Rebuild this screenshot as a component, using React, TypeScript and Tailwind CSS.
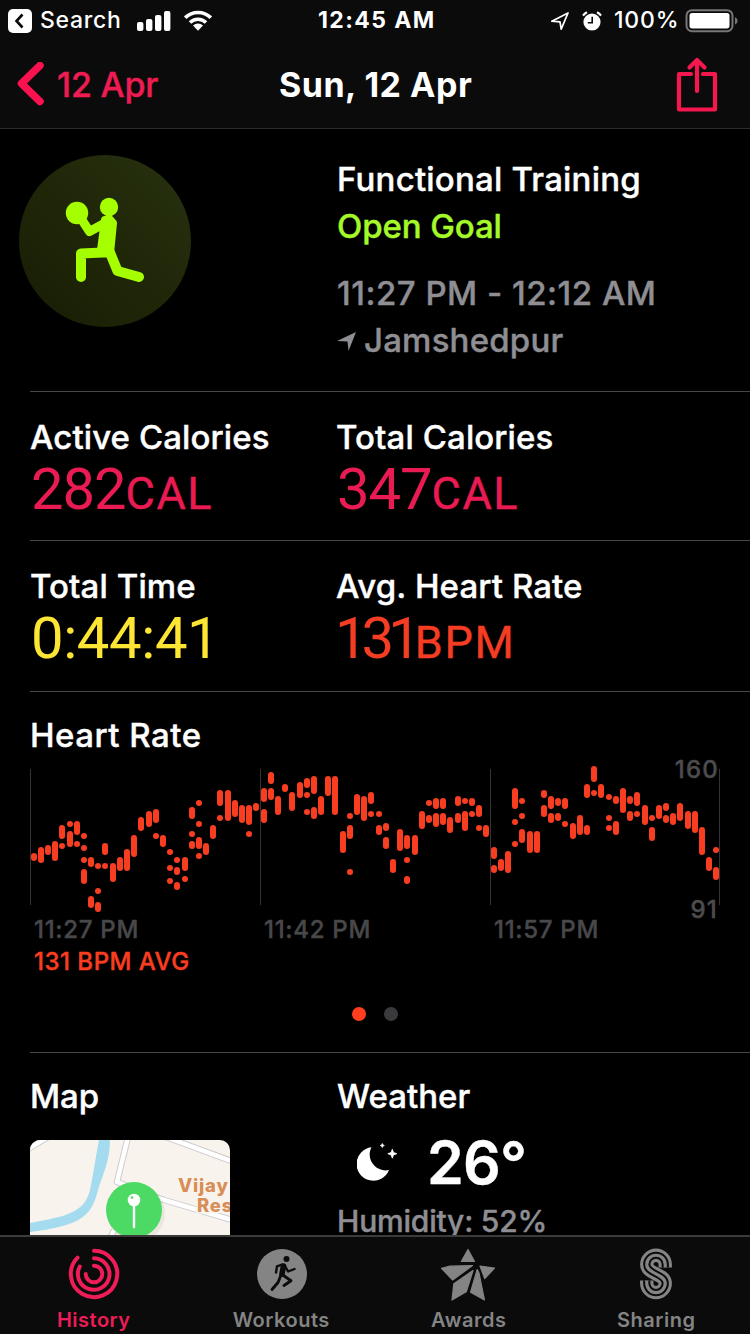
import type { ReactNode } from "react";

// a single number is a dot, a pair is a bar from top to bottom
type Reading = number | [number, number];

const READINGS: Reading[][] = [
    [[98, 106]], [[92, 108]], [[90, 100]], [[86, 106]],
    [[70, 84], 91], [69, [76, 92]], [[66, 80], 89], [81, 93, 105, [114, 129]],
    [[102, 112], [141, 153]], [111, 136, [147, 157]], [[88, 100], 111], [[108, 127]],
    [[102, 116]], [[94, 116]], [[80, 102]], [[62, 76]],
    [[56, 72]], [[54, 68], 81], [[80, 92]], [97, 113, 126],
    [105, [112, 120], [127, 135]], [[102, 116], 124], [[52, 64], 79, [86, 94]], [48, 69, [82, 94], 101],
    [[88, 100]], [[70, 84]], [[35, 51], 63], [[35, 66]],
    [[45, 62]], [[50, 68]], [[50, 70], 79], [[48, 56]],
    // 11:42
    [[33, 47], [54, 68]], [[17, 29], [33, 45]], [[41, 60]], [[29, 37]],
    [[37, 56]], [[27, 43]], [[23, 33], 40, 57], [[21, 39], [52, 64]],
    [[41, 60]], [[21, 41]], [[21, 60]], [[76, 98]],
    [61, [70, 84], 117], [[39, 60]], [[41, 66]], [[37, 49], 59],
    [59, [70, 80]], [[68, 76], [82, 94]], [[104, 118]], [[74, 96]],
    [[80, 94], 105, [121, 129]], [[80, 100]], [[56, 74]], [48, [60, 68]],
    [[43, 54], [58, 72]], [[43, 54], [58, 70]], [[62, 78]], [[41, 51], [58, 68]],
    [46, [56, 76]], [[43, 51], 59], [[50, 62], 73], [[70, 82]],
    // 11:57
    [[92, 104], [110, 118]], [[104, 116]], [[96, 118]], [[33, 54], 67, 89],
    [46, 61, [74, 88]], [[76, 98]], [[76, 98]], [[35, 43], [50, 62]],
    [[41, 54], [58, 68]], [[43, 51], [58, 66]], [[43, 54], 69], [[68, 84]],
    [[60, 80]], [[29, 43], [70, 80]], [[11, 27], 38], [[29, 43]],
    [42, 63, 73], [[41, 49], [66, 80]], [[33, 58]], [[41, 49], [56, 66]],
    [[37, 51], 59], [[50, 70]], [63, [72, 86]], [[50, 64]],
    [[48, 56], [60, 68]], [[58, 70]], [[48, 66]], [[56, 74]],
    [[56, 78]], [[72, 100]], [[102, 116]], [95, [112, 125]],
];

const TIMES = ["11:27 PM", "11:42 PM", "11:57 PM"];

function StatusBar() {
    return (
        <div className="flex h-[41px] items-center pl-2 text-[23px] font-medium text-white">
            <svg className="h-6 w-6" viewBox="0 0 24 24">
                <rect width="24" height="24" rx="5" fill="#fff" />
                <path d="M14.5 5.5 8.5 12l6 6.5" fill="none" stroke="#0b0b0b" strokeWidth="2.6" />
            </svg>
            <span className="ml-2 w-[97px] tracking-[0.7px]">Search</span>
            <svg className="h-5 w-[34px]" viewBox="0 0 34 20" fill="#fff">
                <rect x="0" y="11" width="6.4" height="9" rx="2" />
                <rect x="9" y="8" width="6.4" height="12" rx="2" />
                <rect x="18" y="4" width="6.4" height="16" rx="2" />
                <rect x="27" y="0" width="6.4" height="20" rx="2" />
            </svg>
            <svg className="ml-[13px] h-[21px] w-7" viewBox="0 0 28 21">
                <g fill="none" stroke="#fff" strokeWidth="3.6">
                    <path d="M1.2 7.7a18.2 18.2 0 0 1 25.6 0" />
                    <path d="M6 12.6a11.3 11.3 0 0 1 16 0" />
                </g>
                <path d="M9 15.6a7.2 7.2 0 0 1 10 0L14 20.8Z" fill="#fff" />
            </svg>
            <span className="ml-[106px] w-[232px] font-bold tracking-[1.4px]">12:45 AM</span>
            <svg className="h-5 w-5" viewBox="0 0 20 20">
                <path d="M1.8 10.2 18 2 11.2 18.2 10 10.8Z" fill="none" stroke="#fff" strokeWidth="1.7" strokeLinejoin="round" />
            </svg>
            <svg className="ml-3 h-5 w-5" viewBox="0 0 20 20">
                <circle cx="10" cy="11" r="8.6" fill="#fff" />
                <path d="M10.2 5.8v6H5.8" fill="none" stroke="#0b0b0b" strokeWidth="1.6" />
                <path d="M1 4.6A12 12 0 0 1 5 1.3M15 1.3a12 12 0 0 1 4 3.3" fill="none" stroke="#fff" strokeWidth="2.2" />
            </svg>
            <span className="ml-3 w-[71px] tracking-[0.8px]">100%</span>
            <svg className="h-6 w-[54px]" viewBox="0 0 54 24">
                <rect x="1.5" y="1.2" width="46" height="21" rx="5.5" fill="none" stroke="#77777a" strokeWidth="2" />
                <rect x="4.5" y="4" width="40" height="15.4" rx="2.6" fill="#fff" />
                <path d="M50 8.3c3.4 1.2 3.4 6 0 7.2Z" fill="#77777a" />
            </svg>
        </div>
    );
}

function NavBar() {
    return (
        <div className="flex h-[87px] items-center text-[34px]">
            <svg className="ml-[17px] h-[46px] w-[28px]" viewBox="0 0 28 46">
                <path d="M23 3.500 4.500 21.500 23 39.500" fill="none" stroke="#fa114f" strokeWidth="7.500" strokeLinecap="round" strokeLinejoin="round" />
            </svg>
            <span className="ml-3 w-[222px] font-medium tracking-[-0.2px] text-[#ee1c52] [-webkit-text-stroke:0.4px]">12 Apr</span>
            <h1 className="w-[397px] font-bold tracking-[0.5px] text-white">Sun, 12 Apr</h1>
            <svg className="h-14 w-[42px]" viewBox="0 0 42 56" fill="none" stroke="#f5184f" strokeWidth="4.200" strokeLinecap="round" strokeLinejoin="round">
                <path d="M15 17H3v35.500h36V17H27" />
                <path d="M21 34V3.500M13.500 10.500 21 3l7.500 7.500" />
            </svg>
        </div>
    );
}

function WorkoutSummary() {
    return (
        <section className="flex h-[262px] pt-[26px] pl-[19px]">
            <div className="mr-[146px] h-[172px] w-[172px] shrink-0 rounded-full bg-linear-to-tr from-[#181d04] to-[#27310f]">
                <svg viewBox="0 0 172 172" fill="none" stroke="#a6ff00" strokeLinecap="round" strokeLinejoin="round">
                    <circle cx="58" cy="58" r="11.200" fill="#a6ff00" stroke="none" />
                    <circle cx="90" cy="52" r="9.200" fill="#a6ff00" stroke="none" />
                    <path d="M63 65 70.500 76.500 88 67" strokeWidth="9" />
                    <path d="M86 65 91 64.500 94 68 91 98 84 98 82 95Z" fill="#a6ff00" strokeWidth="8" />
                    <path d="M62 122V98.500L84 97.500 91 97.500 98.500 116 120 122" strokeWidth="10" />
                </svg>
            </div>
            <div className="pt-px text-[33px] leading-[47px] font-medium whitespace-nowrap text-[#8e8e93] [-webkit-text-stroke:0.4px]">
                <p className="tracking-[0.2px] text-white">Functional Training</p>
                <p className="tracking-[-0.1px] text-[#a5f928]">Open Goal</p>
                <p className="mt-5 tracking-[0.5px]">11:27 PM - 12:12 AM</p>
                <p className="flex items-center tracking-[0.2px]">
                    <svg className="mr-[7px] h-5 w-5" viewBox="0 0 20 20">
                        <path d="M0 10 19 1 11.500 20 10.500 10.500Z" fill="#8e8e93" />
                    </svg>
                    Jamshedpur
                </p>
            </div>
        </section>
    );
}

function Divider() {
    return <div className="ml-[30px] h-px bg-[#48484a]" />;
}

function Stat({ label, children, style }: { label: string; children: ReactNode; style: string }) {
    return (
        <div>
            <p className="-ml-px text-[33px] leading-10 font-medium tracking-[0.1px] [-webkit-text-stroke:0.4px]">{label}</p>
            <p className={`mt-1 font-[Roboto] text-[58px] leading-[56px] ${style}`}>{children}</p>
        </div>
    );
}

function Unit({ children }: { children: string }) {
    return <span className="text-[45px] tracking-[1.6px] [-webkit-text-stroke:0.4px]">{children}</span>;
}

function HeartRateChart() {
    return (
        <svg className="block h-[160px] w-[720px] overflow-visible" viewBox="0 0 720 160">
            {[0, 230, 460, 689].map((x) => (
                <rect key={x} x={x} y="14" width="1" height="136" fill="#343436" />
            ))}
            {READINGS.map((column, i) =>
                column.map((r, j) => {
                    const [top, bottom] = typeof r === "number" ? [r - 3, r + 3] : r;
                    const x = Math.floor(i * 7.1875 + 0.1) + 1;
                    return <rect key={`${i}-${j}`} x={x} y={top} width="6" height={bottom - top} rx="3" fill="#f93d20" />;
                })
            )}
            <g fill="#4c4c4e" stroke="#4c4c4e" strokeWidth="0.400" fontSize="24" fontWeight="500" textAnchor="end" letterSpacing="1.2">
                <text x="689" y="22.500">160</text>
                <text x="688" y="163">91</text>
            </g>
        </svg>
    );
}

function HeartRate() {
    return (
        <section className="h-[360px] pt-[23px] pl-[30px]">
            <h2 className="text-[33px] leading-10 font-medium tracking-[0.5px] [-webkit-text-stroke:0.4px]">Heart Rate</h2>
            <HeartRateChart />
            <div className="-mt-px flex pl-1 text-[24px] leading-8 font-medium tracking-[0.7px] text-[#48484a] [-webkit-text-stroke:0.4px]">
                {TIMES.map((time) => (
                    <span key={time} className="w-[230px]">{time}</span>
                ))}
            </div>
            <p className="pl-1 text-[24px] leading-8 font-medium tracking-[0.5px] text-[#f93d20] [-webkit-text-stroke:0.4px]">131 BPM AVG</p>
            <div className="mt-[29px] flex justify-center gap-[18px] pr-[30px]">
                <span className="h-3.5 w-3.5 rounded-full bg-[#ff3f1e]" />
                <span className="h-3.5 w-3.5 rounded-full bg-[#3a3a3c]" />
            </div>
        </section>
    );
}

function MapPreview() {
    return (
        <svg className="mt-6 block h-[96px] w-[200px] rounded-t-[10px]" viewBox="0 0 200 96">
            <rect width="200" height="96" fill="#f8f4ed" />
            <path d="M69 0h11c0 22-8 36-12 50-4 16-9 27-29 34-12 4-24 6-39 8v-9c14-3 28-5 38-9 13-5 19-12 22-24 4-19 6-35 9-50Z" fill="#a5dbee" />
            <g fill="none" strokeLinejoin="round">
                <path d="M-2 9 18-3M98-3 87 42l47 18 68 20M136-3l68 25M84 90l-5 12" stroke="#cfcbd0" strokeWidth="6.500" />
                <path d="M-2 9 18-3M98-3 87 42l47 18 68 20M136-3l68 25M84 90l-5 12" stroke="#fff" strokeWidth="4.500" />
            </g>
            <g fill="#d98d57" stroke="#f8f4ed" strokeWidth="3" paintOrder="stroke" fontSize="18.500" fontWeight="800" letterSpacing="0.800">
                <text x="148" y="52">Vijay</text>
                <text x="167" y="72">Res</text>
            </g>
            <circle cx="106" cy="73" r="29" fill="#000" opacity="0.06" />
            <circle cx="104" cy="70" r="28" fill="#4cd964" />
            <path d="M104 62v25" stroke="#fff" strokeWidth="2.400" strokeLinecap="round" />
            <circle cx="104" cy="60" r="6.300" fill="#fff" />
            <circle cx="102" cy="57.500" r="1.300" fill="#4cd964" />
        </svg>
    );
}

function Weather() {
    return (
        <div>
            <h2 className="leading-10">Weather</h2>
            <div className="flex h-[80px] items-center pt-3 pl-5">
                <svg className="h-10 w-[42px]" viewBox="0 0 42 40">
                    <path d="M14.500 5.200A16.800 16.800 0 1 0 32 28C20 31 8 18 14.500 5.200Z" fill="#fff" />
                    <path d="m35.300 7.200 1.200 3.300 3.300 1.200-3.300 1.200-1.200 3.300-1.200-3.300-3.300-1.200 3.300-1.200ZM25.300 1.500l.6 1.400 1.400.6-1.400.6-.6 1.400-.6-1.400-1.400-.6 1.400-.6Z" fill="#fff" stroke="#fff" strokeWidth="0.800" />
                </svg>
                <span className="ml-7 text-[59px] leading-none font-semibold tracking-[-0.8px]">26°</span>
            </div>
            <p className="mt-[5px] text-[30px] leading-10 tracking-[-0.2px] text-[#8e8e93]">Humidity: 52%</p>
        </div>
    );
}

function HistoryIcon() {
    return (
        <svg className="h-[52px] w-[52px]" viewBox="-26 -26 52 52" fill="none" stroke="#ee1c57" strokeWidth="4" strokeLinecap="round">
            <path d="M0-23.200A23.200 23.200 0 1 1-16.400-16.400" />
            <path d="M0-15.800A15.800 15.800 0 1 1-14.200-7.500" />
            <path d="M0-8.300A8.300 8.300 0 1 1-8.300 0" />
        </svg>
    );
}

function WorkoutsIcon() {
    return (
        <svg className="ml-px h-[52px] w-[52px]" viewBox="0 0 52 52">
            <circle cx="26" cy="26" r="25" fill="#848484" />
            <g fill="none" stroke="#0b0b0b" strokeLinecap="round" strokeLinejoin="round">
                <circle cx="30.500" cy="11" r="3" fill="#0b0b0b" stroke="none" />
                <path d="M27.500 18 26 26" strokeWidth="5.600" />
                <path d="M26 16.600 21 18.300 20 24.500M29 18l3.200 5.500L38.500 21" strokeWidth="2.400" />
                <path d="M25 27 22 34.500 16 41.500M27.500 27.500l7.500 5.200L28 37.500" strokeWidth="2.900" />
            </g>
        </svg>
    );
}

function AwardsIcon() {
    return (
        <svg className="mr-0.5 h-[52px] w-[56px] overflow-visible" viewBox="0 0 56 52" fill="#848484" stroke="#848484" strokeWidth="1.200" strokeLinejoin="round">
            <path d="M28 1.500 34.500 13.500H21.300Z" />
            <path d="M1.500 20.300 10 18.200 32.500 17.500 12.700 32Z" />
            <path d="M33 22.500 26.300 43.800 12 52 13.800 35.800Z" />
            <path d="M37.200 21.500 39 25 44.500 52 30.500 44.300Z" />
            <path d="M40 18 54.500 20.200 44.700 30.500Z" />
        </svg>
    );
}

function SharingIcon() {
    const d = "M25.250 19.500V16.500A9.250 9.250 0 0 0 6.750 16.500C6.750 26 25.250 25.800 25.250 35.300A9.250 9.250 0 0 1 6.750 35.300V32.500";
    return (
        <svg className="h-[52px] w-8" viewBox="0 0 32 52" fill="none">
            <path d={d} stroke="#848484" strokeWidth="13.400" />
            <path d={d} stroke="#0b0b0b" strokeWidth="7.200" />
            <path d={d} stroke="#848484" strokeWidth="3.200" />
        </svg>
    );
}

const TABS = [
    { name: "History", icon: <HistoryIcon />, color: "text-[#ee1c57]" },
    { name: "Workouts", icon: <WorkoutsIcon />, color: "text-[#848484]" },
    { name: "Awards", icon: <AwardsIcon />, color: "text-[#848484]" },
    { name: "Sharing", icon: <SharingIcon />, color: "text-[#848484]" },
];

function TabBar() {
    return (
        <nav className="grid h-[99px] grid-cols-4 border-t-2 border-[#3b3b3b] bg-[#0b0b0b]">
            {TABS.map((tab) => (
                <div key={tab.name} className={`flex flex-col items-center pt-[11px] text-[20px] font-semibold ${tab.color}`}>
                    {tab.icon}
                    <span className="mt-[7px] leading-[26px] tracking-[0.5px]">{tab.name}</span>
                </div>
            ))}
        </nav>
    );
}

export default function App() {
    return (
        <div className="h-[1334px] w-[750px] overflow-hidden bg-black font-[Inter,sans-serif] text-white">
            <header className="h-[129px] border-b border-[#2c2c2e] bg-[#0b0b0b]">
                <StatusBar />
                <NavBar />
            </header>
            <main className="h-[1106px] overflow-hidden">
                <WorkoutSummary />
                <Divider />
                <section className="grid h-[148px] grid-cols-[306px_1fr] pt-[25px] pl-[31px]">
                    <Stat label="Active Calories" style="tracking-[-1.1px] text-[#ea1b53]">282<Unit>CAL</Unit></Stat>
                    <Stat label="Total Calories" style="tracking-[-1.1px] text-[#ea1b53]">347<Unit>CAL</Unit></Stat>
                </section>
                <Divider />
                <section className="grid h-[150px] grid-cols-[306px_1fr] pt-[25px] pl-[31px]">
                    <Stat label="Total Time" style="tracking-[-0.4px] text-[#fde533]">0:44:41</Stat>
                    <Stat label="Avg. Heart Rate" style="-ml-0.5 tracking-[-6px] text-[#f43d22]">131<Unit>BPM</Unit></Stat>
                </section>
                <Divider />
                <HeartRate />
                <Divider />
                <section className="grid grid-cols-[306px_1fr] pt-[23px] pl-[31px] text-[33px] font-medium [-webkit-text-stroke:0.4px]">
                    <div>
                        <h2 className="-ml-px leading-10">Map</h2>
                        <div className="-ml-px">
                            <MapPreview />
                        </div>
                    </div>
                    <Weather />
                </section>
            </main>
            <TabBar />
        </div>
    );
}
